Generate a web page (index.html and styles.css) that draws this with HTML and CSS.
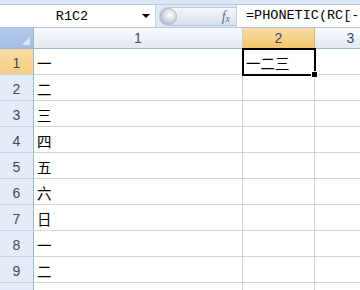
FILE: index.html
```html
<!DOCTYPE html>
<html>

<head>
    <meta name="viewport" content="width=device-width, initial-scale=1"/>
    <link rel="stylesheet" href="styles.css">
</head>

<body>
    <div class="ribbon-edge"></div>

    <div class="formula-bar">
        <div class="name-box">
            <span class="name-text">R1C2</span>
            <span class="name-arrow"></span>
        </div>
        <div class="fx-area">
            <div class="fx-pill">
                <span class="knob"></span>
                <span class="fx">f<sub>x</sub></span>
            </div>
        </div>
        <div class="formula-input">=PHONETIC(RC[-</div>
    </div>

    <div class="sheet">
        <div class="corner"><span class="corner-mark"></span></div>
        <div class="col-head">1</div>
        <div class="col-head selected">2</div>
        <div class="col-head">3</div>

        <div class="row-head selected">1</div>
        <div class="cell">一</div>
        <div class="cell active">一二三</div>
        <div class="cell"></div>

        <div class="row-head">2</div>
        <div class="cell">二</div>
        <div class="cell"></div>
        <div class="cell"></div>

        <div class="row-head">3</div>
        <div class="cell">三</div>
        <div class="cell"></div>
        <div class="cell"></div>

        <div class="row-head">4</div>
        <div class="cell">四</div>
        <div class="cell"></div>
        <div class="cell"></div>

        <div class="row-head">5</div>
        <div class="cell">五</div>
        <div class="cell"></div>
        <div class="cell"></div>

        <div class="row-head">6</div>
        <div class="cell">六</div>
        <div class="cell"></div>
        <div class="cell"></div>

        <div class="row-head">7</div>
        <div class="cell">日</div>
        <div class="cell"></div>
        <div class="cell"></div>

        <div class="row-head">8</div>
        <div class="cell">一</div>
        <div class="cell"></div>
        <div class="cell"></div>

        <div class="row-head">9</div>
        <div class="cell">二</div>
        <div class="cell"></div>
        <div class="cell"></div>

        <div class="row-head"></div>
        <div class="cell"></div>
        <div class="cell"></div>
        <div class="cell"></div>
    </div>
</body>

</html>
```

FILE: styles.css
```css
html, body {
    margin: 0;
    padding: 0;
    width: 360px;
    height: 290px;
    overflow: hidden;
    background: #ffffff;
}

.ribbon-edge {
    height: 4px;
    background: #dbe6f4;
    border-bottom: 1px solid #b8c9e0;
}

.formula-bar {
    display: flex;
    height: 22px;
    background: #dfe9f5;
    border-bottom: 1px solid #b6c6dc;
}

.name-box {
    width: 155px;
    display: flex;
    align-items: center;
    background: #ffffff;
    border-right: 1px solid #c9d5e5;
}

.name-text {
    flex: 1;
    text-align: center;
    padding-left: 2px;
    font-family: "Liberation Mono", monospace;
    font-size: 13.5px;
    color: #000000;
}

.name-arrow {
    width: 0;
    height: 0;
    margin-right: 5px;
    border-left: 4px solid transparent;
    border-right: 4px solid transparent;
    border-top: 4px solid #000000;
}

.fx-area {
    width: 80px;
    display: flex;
    align-items: center;
    padding: 2px 0 1px 3px;
    box-sizing: border-box;
}

.fx-pill {
    flex: 1;
    height: 19px;
    display: flex;
    align-items: center;
    justify-content: space-between;
    padding-right: 6px;
    background: linear-gradient(#f5f8fc, #d6e0ec);
    border: 1px solid #b9c7d9;
    border-right: none;
    border-radius: 10px 0 0 10px;
    box-sizing: border-box;
}

.knob {
    width: 17px;
    height: 17px;
    border-radius: 50%;
    background: radial-gradient(circle at 62% 38%, #ffffff 0%, #d6dce4 45%, #a8b2be 100%);
    border: 1px solid #a8b4c3;
    box-sizing: border-box;
}

.fx {
    font-family: "Liberation Serif", serif;
    font-style: italic;
    font-size: 14px;
    color: #5a6f8a;
}

.fx sub {
    font-size: 10px;
    vertical-align: -1px;
}

.formula-input {
    flex: 1;
    background: #ffffff;
    border-left: 1px solid #c9d5e5;
    padding: 3px 0 0 9px;
    font-family: "Liberation Mono", monospace;
    font-size: 13.5px;
    white-space: nowrap;
    overflow: hidden;
    color: #000000;
}

.sheet {
    display: grid;
    grid-template-columns: 34px 209px 72px 72px;
    grid-template-rows: 21px repeat(10, 26px);
    font-family: "Liberation Sans", sans-serif;
}

.corner {
    position: relative;
    background: linear-gradient(#b4cbeb, #a3bde4);
    border-right: 1px solid #9eb6ce;
    border-bottom: 1px solid #9eb6ce;
}

.corner-mark {
    position: absolute;
    right: 3px;
    bottom: 3px;
    width: 0;
    height: 0;
    border-left: 8px solid transparent;
    border-bottom: 8px solid #dde7f5;
}

.col-head {
    display: flex;
    align-items: center;
    justify-content: center;
    background: linear-gradient(#f8fafd, #e3e9f2);
    border-right: 1px solid #c5d1e0;
    border-bottom: 1px solid #9eb6ce;
    font-size: 14px;
    color: #3b4a5c;
}

.col-head.selected {
    background: linear-gradient(#f9dda6, #f2c56a);
    border-right-color: #e0b25e;
    border-bottom: 1px solid #f29536;
}

.row-head {
    display: flex;
    align-items: flex-end;
    justify-content: center;
    padding-bottom: 3px;
    box-sizing: border-box;
    background: #e4ecf7;
    border-right: 1px solid #9eb6ce;
    border-bottom: 1px solid #c5d1e0;
    font-size: 14px;
    color: #3b4a5c;
}

.row-head.selected {
    background: linear-gradient(#f9dca4, #f6cf82);
}

.cell {
    position: relative;
    display: flex;
    align-items: center;
    padding: 2px 0 0 3px;
    box-sizing: border-box;
    border-right: 1px solid #d0d5dc;
    border-bottom: 1px solid #d0d5dc;
    font-family: "Noto Sans CJK SC", sans-serif;
    font-size: 14.5px;
    color: #000000;
    white-space: nowrap;
}

.cell.active {
    outline: 2px solid #000000;
    outline-offset: -1px;
    z-index: 1;
}

.cell.active::after {
    content: "";
    position: absolute;
    right: -4px;
    bottom: -4px;
    width: 5px;
    height: 5px;
    background: #000000;
    border: 1px solid #ffffff;
}
```
